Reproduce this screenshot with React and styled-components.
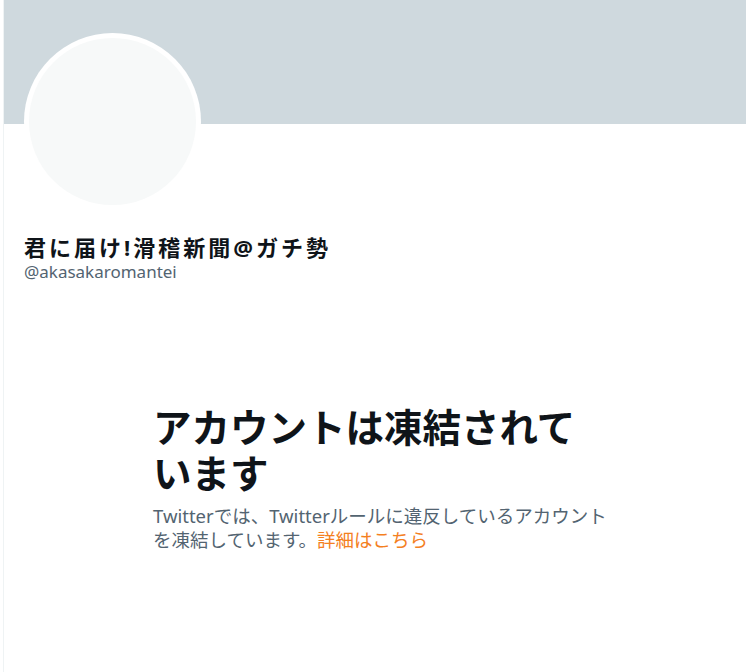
import styled, { createGlobalStyle } from "styled-components";

const GlobalStyle = createGlobalStyle`
  body {
    margin: 0;
    background: #ffffff;
    font-family: "Noto Sans", "Noto Sans CJK JP", sans-serif;
  }
`;

export default function App() {
  return (
    <>
      <GlobalStyle />
      <Page>
        <Banner />
        <ProfileHead>
          <Avatar>
            <AvatarInner />
          </Avatar>
          <Name>君に届け!滑稽新聞@ガチ勢</Name>
          <Handle>@akasakaromantei</Handle>
        </ProfileHead>
        <Notice>
          <NoticeTitle>アカウントは凍結されています</NoticeTitle>
          <NoticeText>
            Twitterでは、Twitterルールに違反しているアカウントを凍結しています。
            <NoticeLink href="#">詳細はこちら</NoticeLink>
          </NoticeText>
        </Notice>
      </Page>
    </>
  );
}

const Page = styled.div`
  margin-left: 3px;
  min-height: 672px;
  border-left: 1px solid #eff3f4;
  display: flex;
  flex-direction: column;
`;

const Banner = styled.div`
  height: 124px;
  background: #cfd9de;
`;

const ProfileHead = styled.div`
  padding: 0 20px;
  display: flex;
  flex-direction: column;
  align-items: flex-start;
`;

const Avatar = styled.div`
  width: 177px;
  height: 177px;
  margin-top: -91px;
  border-radius: 50%;
  background: #ffffff;
  display: flex;
  align-items: center;
  justify-content: center;
`;

const AvatarInner = styled.div`
  width: 167px;
  height: 167px;
  border-radius: 50%;
  background: #f7f9f9;
`;

const Name = styled.h2`
  margin: 24px 0 0;
  font-size: 22px;
  line-height: 26px;
  letter-spacing: 3px;
  font-weight: 700;
  color: #0f1419;
`;

const Handle = styled.div`
  margin-top: 1px;
  font-size: 17px;
  line-height: 22px;
  color: #536471;
`;

const Notice = styled.div`
  width: 456px;
  margin: 121px 0 0 149px;
`;

const NoticeTitle = styled.h1`
  margin: 0;
  font-size: 38.5px;
  line-height: 46px;
  font-weight: 700;
  color: #0f1419;
`;

const NoticeText = styled.p`
  margin: 8px 0 0;
  font-size: 18.5px;
  line-height: 24px;
  color: #536471;
`;

const NoticeLink = styled.a`
  color: #f4801f;
  text-decoration: none;
`;
